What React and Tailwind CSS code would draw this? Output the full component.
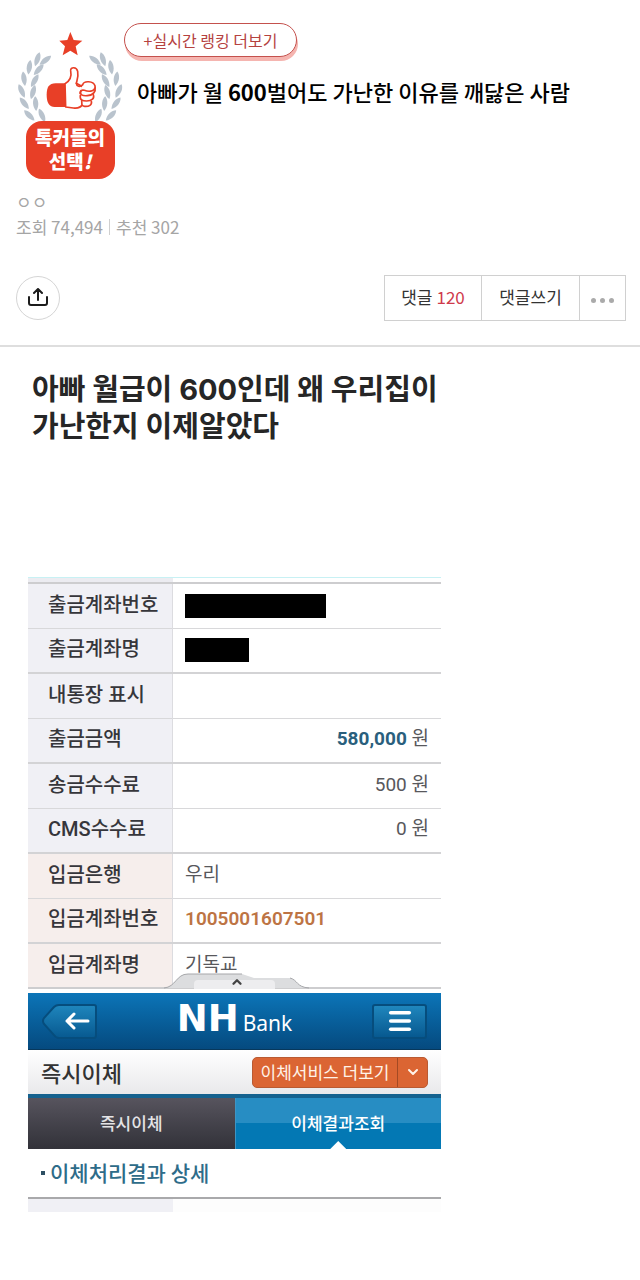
import React from 'react';
import { ArrowLeft, ChevronDown, ChevronUp, Menu } from 'lucide-react';

const LEAVES = [
  [70, 94, 18], [46, 118, 8], [30, 152, -8], [23, 189, -24], [31, 226, -38], [46, 262, -45],
  [94, 97, 52], [74, 125, 42], [62, 158, 30], [57, 192, 16], [65, 227, -4], [84, 262, -24],
];

// the last row is half covered by the pull-up handle
const ROWS = [
  { label: '출금계좌번호', mask: 'w-[141px]' },
  { label: '출금계좌명', mask: 'w-16' },
  { label: '내통장 표시' },
  { label: '출금금액', amount: '580,000', strong: true },
  { label: '송금수수료', amount: '500' },
  { label: 'CMS수수료', amount: '0' },
  { label: '입금은행', text: '우리', deposit: true },
  { label: '입금계좌번호', text: '1005001607501', deposit: true, account: true },
  { label: '입금계좌명', text: '기독교', deposit: true },
];

function Branch() {
  return LEAVES.map(([x, y, rot]) => (
    <path
      key={`${x}-${y}`}
      d="M0 -22 C10 -12 11 8 0 22 C-11 8 -10 -12 0 -22 Z"
      transform={`translate(${x} ${y}) rotate(${rot})`}
    />
  ));
}

function Emblem() {
  return (
    <svg viewBox="6 0 324 288" className="h-24 w-[108px]" aria-hidden="true">
      <g fill="#b9c3cd">
        <Branch />
        <g transform="translate(337 0) scale(-1 1)">
          <Branch />
        </g>
      </g>
      <path fill="#e83f27" d="M169 12 L179 36 L205 38 L185 55 L191 82 L169 68 L146 82 L153 55 L136 38 L160 36 Z" />
      <path fill="#e83f27" d="M156 166 H125 C105 166 98 178 98 201 C98 225 106 237 122 237 H156 Z" />
      <g fill="#fff" stroke="#e83f27" strokeWidth="5" strokeLinecap="round" strokeLinejoin="round">
        <path d="M153 167 C166 160 174 148 170 128 C169 116 188 116 191 130 C194 145 189 156 187 166 L206 176 L206 228 C200 239 191 242 178 240 L155 237 Z" />
        <path d="M203 210 C204 230 201 234 212 235 C225 236 235 231 232 220" />
        <path d="M199 202 C197 216 205 219 218 219 C234 219 242 211 238 200" />
        <path d="M201 188 C196 201 205 204 220 203 C238 202 246 190 243 178" />
        <path d="M206 170 C210 157 238 159 243 173 C246 189 228 193 211 187 C203 184 198 190 198 196" />
      </g>
      <path fill="none" stroke="#e83f27" strokeWidth="5" strokeLinecap="round" d="M187 166 C188 176 198 178 205 171" />
    </svg>
  );
}

function PostHeader() {
  return (
    <header className="border-b-2 border-[#dedede] px-4 pb-6">
      <div className="flex items-start pt-7">
        <div className="flex w-[108px] shrink-0 flex-col items-center">
          <Emblem />
          <p className="-mt-[3px] h-[58px] w-[89px] rounded-2xl bg-[#e83f27] pt-1 text-center text-[19px] leading-6 font-black text-white">
            톡커들의
            <br />
            선택<i>!</i>
          </p>
        </div>
        <div className="-mt-[5px] min-w-0">
          <button type="button" className="block h-[34px] w-[173px] rounded-full border border-[#c4514d] bg-white text-[16px] leading-8 text-[#b5423f] shadow-[1px_4px_0_#f5b5b0]">
            +실시간 랭킹 더보기
          </button>
          <h1 className="mt-[18px] ml-[13px] text-[22px] leading-8 font-medium text-black">
            아빠가 월 <b>600</b>벌어도 가난한 이유를 깨닳은 사람
          </h1>
        </div>
      </div>

      <div className="mt-[10px] text-[17px] leading-[25px] text-[#a5a5a5]">
        <p>ㅇㅇ</p>
        <p className="flex items-center">
          <span>조회 74,494</span>
          <span className="mx-[6px] h-4 w-px bg-[#cfcfcf]" />
          <span>추천 302</span>
        </p>
      </div>

      <div className="-mr-[2px] mt-9 flex items-center justify-between">
        <button type="button" aria-label="공유" className="flex size-11 items-center justify-center rounded-full border border-[#d5d5d5]">
          <svg viewBox="0 0 20 20" className="size-5" fill="none" stroke="#1c1c1c" strokeWidth="2" strokeLinecap="round" strokeLinejoin="round" aria-hidden="true">
            <path d="M10 12 V1 M6 5 L10 1 L14 5 M1 9 V15 Q1 17 3 17 H17 Q19 17 19 15 V9" />
          </svg>
        </button>
        <div className="flex h-[46px] divide-x divide-[#d0d0d0] border border-[#d0d0d0] text-[17px] text-[#333]">
          <a href="#comments" className="flex w-[97px] items-center justify-center gap-1 pb-[2px]">
            댓글 <span className="text-[#cf3a4b]">120</span>
          </a>
          <button type="button" className="w-[98px] pb-[2px]">댓글쓰기</button>
          <button type="button" aria-label="더보기" className="flex w-[45px] items-center justify-center gap-1 pt-1">
            <span className="size-[5px] rounded-full bg-[#aaa]" />
            <span className="size-[5px] rounded-full bg-[#aaa]" />
            <span className="size-[5px] rounded-full bg-[#aaa]" />
          </button>
        </div>
      </div>
    </header>
  );
}

function RowValue({ row }) {
  if (row.mask) {
    return <span className={`block h-6 bg-black ${row.mask}`} />;
  }
  if (row.amount) {
    return (
      <span className="block text-right">
        <span className={row.strong ? 'font-bold text-[#2a5f7d]' : ''}>{row.amount}</span> 원
      </span>
    );
  }
  if (row.account) {
    return <span className="font-semibold text-[#bd7444]">{row.text}</span>;
  }
  return row.text ?? null;
}

function TransferTable() {
  return (
    <div className="relative">
      <div className="flex h-1">
        <span className="w-[35%] bg-[#ececf1]" />
      </div>
      <table className="w-full table-fixed border-collapse border-y-2 border-[#cdcdcf] font-[Roboto,'Noto_Sans_CJK_KR',sans-serif] text-[19px] leading-6 text-[#58585c]">
        <tbody>
          {ROWS.map((row, i) => (
            <tr key={row.label} className={`h-[45px] ${i % 2 ? 'border-b-2 border-[#d3d3d5]' : 'border-b border-[#d8d8da]'}`}>
              <th
                scope="row"
                className={`w-[35%] border-r border-[#dcdce0] pb-[2px] pl-5 text-left text-[20px] font-medium whitespace-nowrap text-[#36363b] ${row.deposit ? 'bg-[#f6eeec]' : 'bg-[#f0f0f5]'}`}
              >
                {row.label}
              </th>
              <td className={`pr-3 pl-3 ${row.mask ? '' : 'pb-[2px]'}`}>
                <RowValue row={row} />
              </td>
            </tr>
          ))}
        </tbody>
      </table>
      {/* pull-up handle over the table's bottom edge */}
      <button type="button" aria-label="펼치기" className="absolute bottom-0 left-[33%] flex h-[17px] w-[145px] items-end justify-center">
        <svg viewBox="0 0 145 17" className="absolute inset-0 h-full w-full" aria-hidden="true">
          <path d="M0 16 C12 15 12 2 24 2 H78 L90 6 H126 C134 8 132 15 145 16 Z" fill="#dcdddf" />
          <path d="M0 16 C12 15 12 2 24 2 H78 M126 6 C134 8 132 15 145 16" fill="none" stroke="#a6a7aa" />
          <path d="M30 17 V12 Q30 8 34 8 H107 Q111 8 111 12 V17 Z" fill="#ededef" />
        </svg>
        <ChevronUp size={14} strokeWidth={4} className="relative text-[#444]" />
      </button>
    </div>
  );
}

function BankScreen() {
  return (
    <section className="mt-1">
      <div className="flex h-[57px] items-center justify-between border-b border-[#07385c] bg-linear-to-b from-[#0c75b8] to-[#054a7f] px-[14px]">
        <button type="button" aria-label="뒤로" className="relative flex h-[35px] w-[55px] items-center justify-end pr-[7px] text-white">
          <svg viewBox="0 0 55 35" className="absolute inset-0 h-full w-full" aria-hidden="true">
            <defs>
              <linearGradient id="back" x1="0" y1="0" x2="0" y2="1">
                <stop offset="0" stopColor="#1f86bd" />
                <stop offset="1" stopColor="#075990" />
              </linearGradient>
            </defs>
            <path d="M17 1 H52 Q54 1 54 3 V31 Q54 34 52 34 H17 Q14 34 12 31 L2 20 Q0 17 2 14 L12 3 Q14 1 17 1 Z" fill="url(#back)" stroke="#064d7d" strokeWidth="2" />
          </svg>
          <svg viewBox="0 0 26 18" className="relative h-[18px] w-[26px]" fill="none" stroke="currentColor" strokeWidth="3" strokeLinecap="round" strokeLinejoin="round" aria-hidden="true">
            <path d="M24 9 H3 M10 2 L3 9 L10 16" />
          </svg>
        </button>
        <p className="flex items-baseline gap-1 leading-10 text-white">
          <span className="font-['DejaVu_Sans',sans-serif] text-[37px] font-bold">NH</span>
          <span className="font-['Noto_Sans',sans-serif] text-[21px]">Bank</span>
        </p>
        <button type="button" aria-label="메뉴" className="flex h-[35px] w-[55px] items-center justify-center rounded-[3px] border-2 border-[#064d7d] bg-linear-to-b from-[#1f86bd] to-[#075990] text-white">
          <Menu size={28} strokeWidth={3} />
        </button>
      </div>

      <div className="flex h-11 items-center justify-between bg-linear-to-b from-white to-[#e9e9eb] pr-[13px] pl-[13px]">
        <h3 className="text-[22px] leading-8 font-medium text-[#333]">즉시이체</h3>
        <button type="button" className="flex h-[31px] w-[176px] items-center rounded-[5px] border border-[#b95a32] bg-[#db6533] text-[17px] text-[#fff3e8]">
          <span className="flex-1 text-center">이체서비스 더보기</span>
          <span className="flex h-full w-[30px] items-center justify-center border-l border-[#a34a24]">
            <ChevronDown size={16} strokeWidth={3} />
          </span>
        </button>
      </div>

      <nav className="grid h-[55px] grid-cols-2 border-t-4 border-[#15628f] text-[17px] font-medium">
        <a href="#transfer" className="flex items-center justify-center bg-linear-to-b from-[#57545e] to-[#323239] pb-[2px] text-[#e4e4e6]">
          즉시이체
        </a>
        <a href="#result" className="relative flex items-center justify-center border-l border-[#3e95c4] bg-linear-to-b from-[#278dc3] from-50% to-[#0378b4] to-50% pb-[2px] text-white">
          이체결과조회
          <span className="absolute bottom-0 left-1/2 h-2 w-4 -translate-x-1/2 bg-white [clip-path:polygon(50%_0,100%_100%,0_100%)]" />
        </a>
      </nav>

      <h4 className="flex h-[50px] items-center gap-[5px] border-b-2 border-[#a9a9ab] pl-[13px] text-[21px] font-medium text-[#2e6c89]">
        <span className="size-1 bg-[#2d4f63]" />
        이체처리결과 상세
      </h4>
      <div className="flex h-[13px] bg-[#fdfdfd]">
        <span className="w-[35%] bg-[#f0f0f5]" />
      </div>
    </section>
  );
}

export default function App() {
  return (
    <main className="min-h-screen bg-white pb-16 font-['Noto_Sans_CJK_KR',sans-serif]">
      <PostHeader />
      <article className="px-7 pt-6">
        <h2 className="ml-1 font-[Inter,'Noto_Sans_CJK_KR',sans-serif] text-[29px] leading-[37px] font-bold text-[#262626]">
          아빠 월급이 600인데 왜 우리집이
          <br />
          가난한지 이제알았다
        </h2>
        <div className="mt-[132px] w-full max-w-[413px] border-t border-[#c8f1f4]">
          <TransferTable />
          <BankScreen />
        </div>
      </article>
    </main>
  );
}
